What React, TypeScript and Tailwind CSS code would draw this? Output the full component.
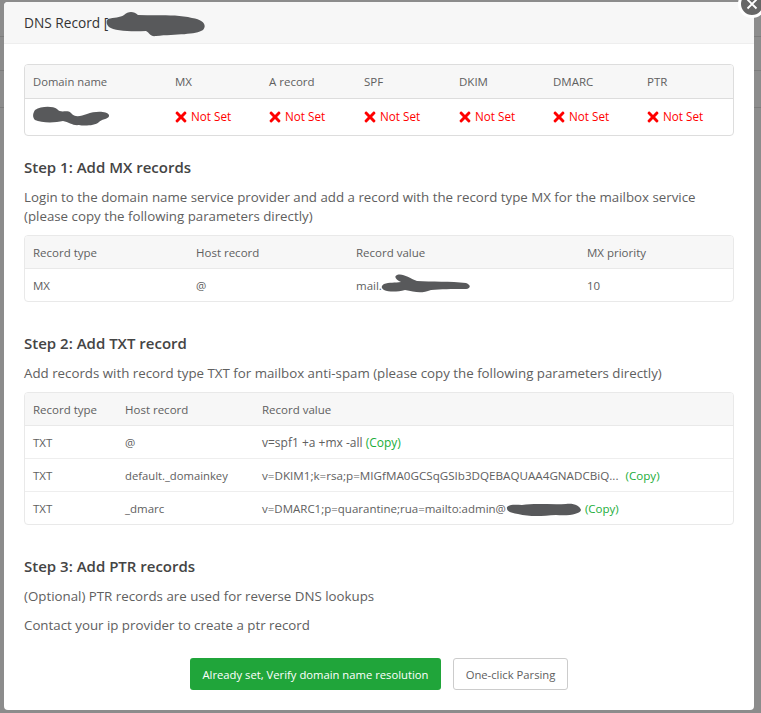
import { FaTimes } from "react-icons/fa";

const statusColumns = [
  { name: "MX", width: "w-[94px]" },
  { name: "A record", width: "w-[95px]" },
  { name: "SPF", width: "w-[95px]" },
  { name: "DKIM", width: "w-[94px]" },
  { name: "DMARC", width: "w-[94px]" },
  { name: "PTR", width: "" },
];

function Redact({ className, d, w, h }: { className: string; d: string; w: number; h: number }) {
  return (
    <svg className={className} width={w} height={h} viewBox={`0 0 ${w} ${h}`} fill="#58595b">
      <path d={d} />
    </svg>
  );
}

function NotSet() {
  return (
    <span className="flex items-center text-[11.7px] text-[#ff0000]">
      <FaTimes size={16} className="-ml-[2.5px] mr-[2.5px] shrink-0" />
      Not Set
    </span>
  );
}

function Copy() {
  return <span className="text-[#1aad3a]">(Copy)</span>;
}

export default function App() {
  return (
    <div className="relative h-[713px] w-[761px] overflow-hidden bg-[#8c8c8c] font-['Open_Sans',sans-serif] text-[11.5px] text-[#606060]">
      {/* page behind the backdrop, only its edges show */}
      <div className="absolute top-[36px] left-0 h-px w-full bg-[#7c7c7c]" />
      <div className="absolute top-[70px] left-0 h-px w-full bg-[#7c7c7c]" />
      <div className="absolute top-[107px] left-0 h-px w-full bg-[#7c7c7c]" />

      <div className="relative ml-[4px] mt-[2px] h-[708px] w-[750px] rounded-[4px] bg-white">
        <div className="flex h-[42px] items-center rounded-t-[4px] border-b border-[#eeeeee] bg-[#f7f7f7] pl-[20px] pt-[2px] text-[13.7px] text-[#333333]">
          DNS Record [
          <Redact className="-ml-[2px]" w={100} h={26} d="M2 8C8 6 14 7 18 4C22 0 28 0 32 4C50 5 70 3 86 7C98 9 101 14 97 19C90 24 70 23 50 25C44 26 44 22 40 20C26 21 8 20 3 16C0 13 0 10 2 8Z" />
        </div>

        <div className="px-[20px] pt-[20px]">
          <div className="overflow-hidden rounded-[4px] border border-[#dddddd]">
            <div className="flex h-[34px] items-center border-b border-[#dddddd] bg-[#f7f7f7] pl-[8px]">
              <div className="w-[142px] shrink-0 pt-[1px] text-[11.25px]">Domain name</div>
              {statusColumns.map((col) => (
                <div key={col.name} className={`shrink-0 ${col.width}`}>
                  {col.name}
                </div>
              ))}
            </div>
            <div className="flex h-[36px] items-center pl-[8px]">
              <div className="w-[142px] shrink-0">
                <Redact className="block" w={76} h={22} d="M2 4C8 0 20 0 24 3C28 8 34 3 38 7C42 12 48 10 54 8C62 5 74 5 76 9C77 13 68 13 66 16C62 20 50 20 46 19C40 20 36 16 30 15C22 17 8 17 2 14C-1 11 0 7 2 4Z" />
              </div>
              {statusColumns.map((col) => (
                <div key={col.name} className={`shrink-0 ${col.width}`}>
                  <NotSet />
                </div>
              ))}
            </div>
          </div>

          <h3 className="mt-[21px] text-[15px] leading-[20px] font-semibold text-[#444444]">Step 1: Add MX records</h3>
          <p className="mt-[11px] text-[13.3px] leading-[19px]">
            Login to the domain name service provider and add a record with the record type MX for the mailbox service
            <br />
            (please copy the following parameters directly)
          </p>

          <div className="mt-[9px] overflow-hidden rounded-[4px] border border-[#e9e9e9]">
            <div className="flex h-[33px] items-center border-b border-[#e9e9e9] bg-[#f7f7f7] pl-[8px] pt-[2px]">
              <div className="w-[163px]">Record type</div>
              <div className="w-[160px]">Host record</div>
              <div className="w-[231px]">Record value</div>
              <div>MX priority</div>
            </div>
            <div className="flex h-[32px] items-center pl-[8px] pt-[2px]">
              <div className="w-[163px]">MX</div>
              <div className="w-[160px]">@</div>
              <div className="flex w-[231px] items-center">
                mail.
                <Redact className="-ml-[1px] -mt-[4px]" w={89} h={20} d="M3 10C8 8 14 9 20 8C16 6 12 3 16 1C22 -1 28 4 36 7C50 8 70 7 85 9C90 11 90 14 85 15C70 15 60 15 50 16C40 20 34 18 24 16C16 18 8 18 3 16C0 14 0 12 3 10Z" />
              </div>
              <div>10</div>
            </div>
          </div>

          <h3 className="mt-[31px] text-[15px] leading-[20px] font-semibold text-[#444444]">Step 2: Add TXT record</h3>
          <p className="mt-[11px] text-[13.3px] leading-[19px]">
            Add records with record type TXT for mailbox anti-spam (please copy the following parameters directly)
          </p>

          <div className="mt-[9px] overflow-hidden rounded-[4px] border border-[#e9e9e9]">
            <div className="flex h-[33px] items-center border-b border-[#e9e9e9] bg-[#f7f7f7] pl-[8px] pt-[2px]">
              <div className="w-[92px]">Record type</div>
              <div className="w-[137px]">Host record</div>
              <div>Record value</div>
            </div>
            <div className="flex h-[33px] items-center border-b border-[#eeeeee] pl-[8px] pt-[2px]">
              <div className="w-[92px]">TXT</div>
              <div className="w-[137px]">@</div>
              <div className="text-[12px]">
                v=spf1 +a +mx -all <Copy />
              </div>
            </div>
            <div className="flex h-[33px] items-center border-b border-[#eeeeee] pl-[8px] pt-[2px]">
              <div className="w-[92px]">TXT</div>
              <div className="w-[137px] text-[11.25px]">default._domainkey</div>
              <div className="text-[11.65px]">
                v=DKIM1;k=rsa;p=MIGfMA0GCSqGSIb3DQEBAQUAA4GNADCBiQ...
                <span className="ml-[7px]">
                  <Copy />
                </span>
              </div>
            </div>
            <div className="flex h-[32px] items-center pl-[8px] pt-[2px]">
              <div className="w-[92px]">TXT</div>
              <div className="w-[137px]">_dmarc</div>
              <div className="flex items-center">
                v=DMARC1;p=quarantine;rua=mailto:admin@
                <Redact className="mr-[4px]" w={75} h={15} d="M1 5C4 2 10 3 16 3C30 1 46 3 60 2C68 1 74 4 75 8C74 12 64 14 50 13C36 14 24 15 12 12C6 11 0 10 1 5Z" />
                <Copy />
              </div>
            </div>
          </div>

          <h3 className="mt-[31px] text-[15px] leading-[20px] font-semibold text-[#444444]">Step 3: Add PTR records</h3>
          <p className="mt-[11px] text-[13.3px] leading-[19px]">(Optional) PTR records are used for reverse DNS lookups</p>
          <p className="mt-[10px] text-[13.3px] leading-[19px]">Contact your ip provider to create a ptr record</p>

          <div className="mt-[23px] flex justify-center gap-[12px]">
            <button className="h-[32px] w-[251px] rounded-[3px] bg-[#20a53a] pt-[2px] text-[11.25px] text-white">
              Already set, Verify domain name resolution
            </button>
            <button className="h-[32px] w-[115px] rounded-[3px] border border-[#cccccc] bg-white pt-[2px] text-[11.25px]">
              One-click Parsing
            </button>
          </div>
        </div>
      </div>

      <div className="absolute -top-[10px] left-[738px] flex h-[28px] w-[28px] items-center justify-center rounded-full border-[3px] border-white bg-[#666666]">
        <svg width="12" height="12" viewBox="0 0 12 12">
          <path d="M1.5 1.5l9 9M10.5 1.5l-9 9" stroke="#fff" strokeWidth="1.8" fill="none" />
        </svg>
      </div>
    </div>
  );
}
